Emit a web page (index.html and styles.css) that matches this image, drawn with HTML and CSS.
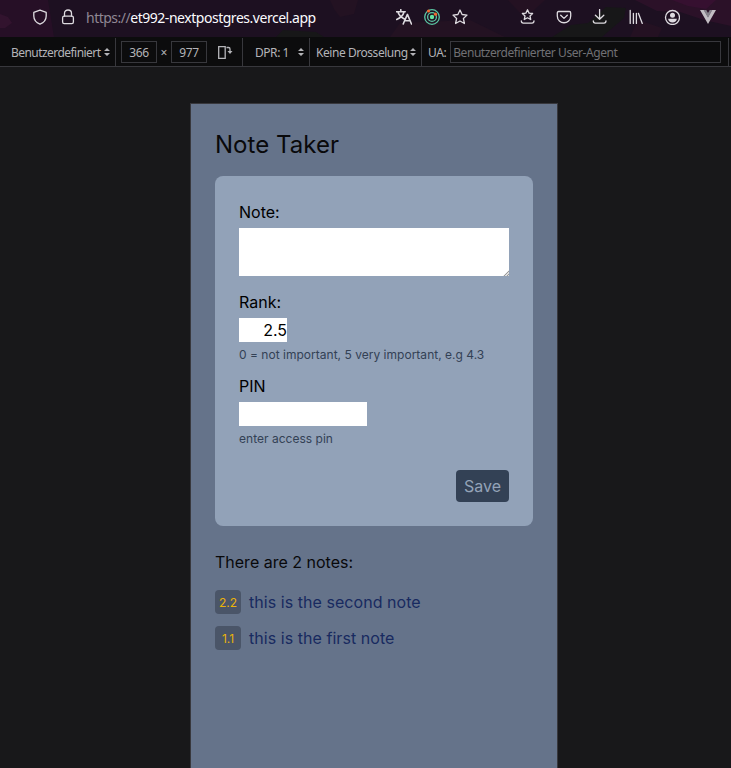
FILE: index.html
```html
<!DOCTYPE html>
<html lang="de">
<head>
<meta charset="utf-8">
<title>Note Taker</title>
<link rel="stylesheet" href="styles.css">
</head>
<body>
<header class="nav">
  <svg class="backdrop" width="731" height="37" viewBox="0 0 731 37" preserveAspectRatio="none">
    <path fill="#260f26" d="M0 0H48L54 37H0z"/><path fill="#32132e" d="M0 14L8 17L12 23L5 28H0z"/>
    <path fill="#231222" d="M330 0H358L354 14L340 17L334 9zM390 37L400 23L470 20L505 37z"/>
    <path fill="#171718" d="M276 37L283 30L316 32L324 37zM552 37L571 25L588 23L606 7L626 8L624 18L602 37z"/>
    <path fill="#2b1128" d="M635 0H731V26L704 20L680 12L657 11z"/><path fill="#361030" d="M672 0H716L706 9L688 6z"/>
    <path fill="#241122" d="M508 0H545L533 11L520 13zM638 20L662 28L658 37H630z"/>
  </svg>
  <div class="address">
    <svg class="icon shield" viewBox="0 0 16 16"><path d="M8 1.2L14.2 3.4V7C14.2 11 11.5 13.8 8 15.2C4.5 13.8 1.8 11 1.8 7V3.4z"/></svg>
    <svg class="icon lock" viewBox="0 0 16 16"><path d="M4.5 7V4.2C4.5 -.1 11.5 -.1 11.5 4.2V7"/><rect x="2.6" y="7.2" width="10.8" height="7.4" rx="1.6"/></svg>
    <span class="url"><span class="scheme">https://</span>et992-nextpostgres.vercel.app</span>
  </div>
  <div class="page-actions">
    <svg class="icon translate" viewBox="0 0 16 16"><path d="M.5 2.7H9.2M4.8 .7V2.7M2 3C3 7 5.5 8.5 8 9.8M8 3C7 7 4 9 .7 10.5M7.2 15L11.4 5.4L15.5 15M8.8 11.8H14"/></svg>
    <svg class="icon" viewBox="0 0 16 16"><g stroke="#5bc6a4"><circle cx="8" cy="8" r="7.3"/><circle cx="8" cy="8" r="4.4"/></g><circle cx="8" cy="8" r="2.2" fill="#65e4a2" stroke="none"/><g fill="#f2682d" stroke="none"><circle cx="4.5" cy="2" r="1.6"/><circle cx="11.5" cy="5.2" r="1.6"/></g></svg>
    <svg class="icon" viewBox="0 0 16 16"><path d="M8 1L10.1 5.5L15 6.1L11.4 9.5L12.4 14.5L8 12L3.6 14.5L4.6 9.5L1 6.1L5.9 5.5z"/></svg>
  </div>
  <div class="actions">
    <svg class="icon" viewBox="0 0 16 16"><path d="M7.5 .8L9.1 4.1L12.6 4.5L10 7L10.7 10.5L7.5 8.8L4.3 10.5L5 7L2.4 4.5L5.9 4.1zM1.3 11.8C1.3 13.7 2 14.2 3.3 14.2H12C13.4 14.2 14 13.7 14 11.8"/></svg>
    <svg class="icon" viewBox="0 0 16 16"><path d="M2.6 2.5H13.4Q14.7 2.5 14.7 4V7C14.7 16 1.3 16 1.3 7V4Q1.3 2.5 2.6 2.5zM4.7 6.2L8 9.4L11.3 6.2"/></svg>
    <svg class="icon" viewBox="0 0 16 16"><path d="M7.6 .5V10M3.4 6.2L7.6 10.3L11.8 6.2M1.3 11.8C1.3 13.7 2 14.2 3.3 14.2H12C13.4 14.2 14 13.7 14 11.8"/></svg>
    <svg class="icon" viewBox="0 0 16 16"><path d="M2.2 1.3V14.4M5.4 4.3V14.4M8.4 4.3V14.4M10.4 4.3L14.3 14.4"/></svg>
    <svg class="icon" viewBox="0 0 16 16"><circle cx="8.5" cy="8.5" r="7"/><g fill="#dedbe0" stroke="none"><circle cx="8.5" cy="6.3" r="2.5"/><path d="M4.1 9.7H12.9C12.5 12.2 11 13.5 8.5 13.5S4.5 12.2 4.1 9.7z"/></g></svg>
    <svg class="icon" viewBox="0 0 16 16"><g stroke="none"><path fill="#c2bdc3" d="M0 1H4L8 8L12 1H16L8 15z"/><path fill="#85818a" d="M3.6 1H6.3L8 4L9.7 1H12.4L8 8.7z"/></g></svg>
  </div>
</header>
<div class="toolbar">
  <div class="cell device"><span class="t-device">Benutzerdefiniert</span><svg class="arrows" viewBox="0 0 6 8"><path d="M0 3L3 0L6 3zM0 5H6L3 8z"/></svg></div>
  <div class="cell size"><span class="box">366</span><span class="times">×</span><span class="box">977</span>
    <svg class="rotate" viewBox="0 0 16 16"><path d="M1.7 2.7H8.2V14.3H1.7zM9.5 3.5H11.5Q13 3.5 13 5V8" fill="none" stroke="#b6b6ba" stroke-width="1.3"/><path d="M10.5 7H15.5L13 10z" fill="#b6b6ba"/></svg></div>
  <div class="cell dpr"><span class="t-dpr">DPR: 1</span><svg class="arrows" viewBox="0 0 6 8"><path d="M0 3L3 0L6 3zM0 5H6L3 8z"/></svg></div>
  <div class="cell throttle"><span class="t-throttle">Keine Drosselung</span><svg class="arrows" viewBox="0 0 6 8"><path d="M0 3L3 0L6 3zM0 5H6L3 8z"/></svg></div>
  <div class="cell agent"><span>UA:</span><span class="box ua">Benutzerdefinierter User-Agent</span></div>
</div>
<main class="phone">
  <h1>Note Taker</h1>
  <form class="card">
    <label for="note">Note:</label>
    <div class="note-wrap"><textarea id="note"></textarea><svg class="grip" viewBox="0 0 6 6"><path d="M0 6L6 0V6z" fill="#ddd"/><path d="M1 6L6 1M4 6L6 4" stroke="#999"/></svg></div>
    <label for="rank">Rank:</label>
    <input id="rank" class="rank" value="2.5">
    <p class="hint">0 = not important, 5 very important, e.g 4.3</p>
    <label for="pin">PIN</label>
    <input id="pin" class="pin">
    <p class="hint">enter access pin</p>
    <button type="button">Save</button>
  </form>
  <h2>There are 2 notes:</h2>
  <ul>
    <li><span class="badge">2.2</span><a>this is the second note</a></li>
    <li><span class="badge">1.1</span><a>this is the first note</a></li>
  </ul>
</main>
</body>
</html>
```
FILE: styles.css
```css
* { box-sizing: border-box; margin: 0; padding: 0; }
body {
  height: 768px; overflow: hidden; display: flex; flex-direction: column;
  background: #18181a; font: 16px/24px Inter, "Liberation Sans", sans-serif; color: #09090b;
}
.nav {
  position: relative; flex: none; height: 37px; display: flex; align-items: center;
  padding: 0 15px 3px 32px; background: #1d1021;
  font-family: "Noto Sans", sans-serif;
}
.backdrop { position: absolute; inset: 0; }
.address, .page-actions, .actions { position: relative; display: flex; align-items: center; }
.address { width: 364px; }
.icon { flex: none; width: 16px; height: 16px; fill: none; stroke: #dedbe0; stroke-width: 1.3; stroke-linejoin: round; stroke-linecap: round; }
.translate { stroke-width: 1.6; }
.shield { margin-right: 12px; }
.lock { margin-right: 10px; }
.url { font-size: 14px; line-height: 20px; color: #fbfbfe; white-space: nowrap; padding-top: 2px; letter-spacing: -.47px; }
.scheme { color: #8f8793; letter-spacing: -.5px; }
.page-actions { gap: 12px; }
.actions { gap: 20px; margin-left: auto; }

.toolbar {
  flex: none; height: 30px; display: flex; background: #0c0c0d;
  border-bottom: 1px solid #38383d; border-top: 1px solid #0c0c0d;
  font: 12px/16px "Noto Sans", sans-serif; color: #b4b4b8; white-space: nowrap;
}
.cell { display: flex; align-items: center; border-right: 1px solid #38383d; }
.cell > span:not(.box) { padding-top: 1px; }
.device { width: 116px; padding-left: 11px; }
.t-device { width: 93px; letter-spacing: -.55px; }
.size { width: 127px; padding-left: 5px; }
.box { height: 22px; width: 36px; padding-top: 1px; display: flex; align-items: center; justify-content: center; border: 1px solid #38383d; }
.size .box { letter-spacing: -.4px; }
.times { width: 14px; text-align: center; }
.rotate { width: 16px; height: 16px; margin-left: 10px; }
.dpr { width: 67px; padding-left: 12px; }
.t-dpr { width: 43px; letter-spacing: -.45px; }
.throttle { width: 112px; padding-left: 6px; }
.t-throttle { width: 94px; letter-spacing: -.45px; }
.agent { width: 307px; padding-left: 6px; letter-spacing: -.44px; }
.ua { width: 271px; margin-left: 4px; justify-content: flex-start; padding-left: 2px; color: #707074; }
.arrows { width: 6px; height: 8px; fill: #b4b4b8; }

.phone { flex: 1; width: 368px; margin: 36px 0 0 190px; padding: 24px; border: 1px solid #38383d; border-bottom: 0; background: #65738a; }
h1 { font-size: 24px; line-height: 32px; font-weight: 400; padding-top: 1px; margin-bottom: 15px; letter-spacing: .03px; }
.card { height: 350px; padding: 24px; border-radius: 8px; background: #92a2b8; display: flex; flex-direction: column; align-items: flex-start; }
label { margin-bottom: 4px; color: #000; }
.note-wrap { position: relative; margin-bottom: 14px; }
textarea { display: block; width: 270px; height: 48px; border: 0; resize: none; background: #fff; }
.grip { position: absolute; right: 0; bottom: 0; width: 6px; height: 6px; }
input { height: 24px; border: 0; background: #fff; font: inherit; color: #000; }
.rank { width: 48px; text-align: right; }
.pin { width: 128px; }
.hint { margin: 5px 0 11px; font-size: 12px; line-height: 16px; color: #334155; letter-spacing: .02px; }
button { align-self: flex-end; margin-top: auto; height: 32px; padding: 0 8px; border: 0; border-radius: 4px; background: #334155; color: #94a3b8; font: inherit; }
h2 { margin: 24px 0 16px; font-size: 16px; line-height: 24px; font-weight: 400; }
ul { list-style: none; display: flex; flex-direction: column; gap: 12px; }
li { display: flex; align-items: center; gap: 8px; }
.badge { width: 26px; height: 24px; border-radius: 4px; background: #4a5568; color: #eab308; font-size: 12px; line-height: 25px; text-align: center; }
a { color: #182a60; letter-spacing: .05px; }
```
